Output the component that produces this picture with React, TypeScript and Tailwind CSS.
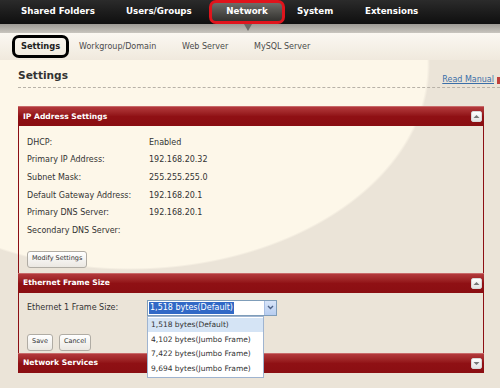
import React from "react";

const rows: [string, string][] = [
  ["DHCP:", "Enabled"],
  ["Primary IP Address:", "192.168.20.32"],
  ["Subnet Mask:", "255.255.255.0"],
  ["Default Gateway Address:", "192.168.20.1"],
  ["Primary DNS Server:", "192.168.20.1"],
  ["Secondary DNS Server:", ""],
];

function Toggle({ up }: { up: boolean }) {
  return (
    <div className="w-[11px] h-[11px] rounded-[2px] bg-gradient-to-b from-white to-[#e4e4e4] border border-[#d8d8d8] flex items-center justify-center">
      <svg width="7" height="5" viewBox="0 0 7 5">
        {up ? (
          <path d="M0.5 4 L3.5 1 L6.5 4 Z" fill="#777" />
        ) : (
          <path d="M0.5 1 L3.5 4 L6.5 1 Z" fill="#777" />
        )}
      </svg>
    </div>
  );
}

function Header({ title, up }: { title: string; up: boolean }) {
  return (
    <div className="h-[20px] flex items-center justify-between pl-[5px] pr-[2px] bg-gradient-to-b from-[#b3393c] via-[#8f1014] to-[#8a0e12] border-t border-[#c86a6a] text-white font-bold text-[7.6px]">
      <span>{title}</span>
      <Toggle up={up} />
    </div>
  );
}

function Btn({ children }: { children: React.ReactNode }) {
  return (
    <div className="h-[17px] px-[4px] flex items-center rounded-[3px] border border-[#b0aca4] bg-gradient-to-b from-white to-[#ebe8e2] text-[6.5px] text-[#333]">
      {children}
    </div>
  );
}

export default function App() {
  return (
    <div
      className="w-[500px] h-[388px] overflow-hidden bg-[#ebe4d8] text-[#333]"
      style={{ fontFamily: '"DejaVu Sans", Verdana, sans-serif' }}
    >
      {/* top nav */}
      <div className="h-[24px] bg-gradient-to-b from-[#2b2b2b] to-[#0f0f0f] flex items-center text-white font-bold text-[8.7px]">
        <div className="ml-[21px] w-[105px]">Shared Folders</div>
        <div className="w-[83px]">Users/Groups</div>
        <div className="h-[24px] w-[76px] rounded-[7px] border-[3px] border-[#e0141c] flex items-center justify-center bg-gradient-to-b from-[#6f6e69] to-[#33322f]">
          Network
        </div>
        <div className="ml-[12px] w-[68px]">System</div>
        <div>Extensions</div>
      </div>
      {/* gray strip */}
      <div className="h-[9px] bg-gradient-to-b from-[#9c9994] to-[#c9c6bf] pl-[244px]">
        <div className="w-0 h-0 border-l-[4px] border-r-[4px] border-t-[7px] border-l-transparent border-r-transparent border-t-[#6c6a66]" />
      </div>
      {/* sub nav */}
      <div className="h-[27px] bg-gradient-to-b from-[#fbf8f2] to-[#f0e9dd] flex items-center text-[8px] text-[#4a4a4a]">
        <div className="ml-[12px] h-[23px] w-[57px] rounded-[7px] border-[3px] border-black flex items-center justify-center font-bold text-[#222] text-[8.3px]">
          Settings
        </div>
        <div className="ml-[10px] w-[103px]">Workgroup/Domain</div>
        <div className="w-[72px]">Web Server</div>
        <div>MySQL Server</div>
      </div>
      {/* main */}
      <div className="h-[328px] pl-[18px] bg-[radial-gradient(ellipse_300px_205px_at_130px_5px,#fdf7e9_99%,#ebe4d8_100%)]">
        <div className="h-[28px] flex justify-between border-b border-dashed border-[#b8b2a8]">
          <div className="pt-[9px] text-[10.6px] font-bold text-[#333] leading-[12px]">Settings</div>
          <div className="pt-[15px] text-[8px] leading-[10px] whitespace-nowrap flex items-start">
            <span className="text-[#3b6fa8] underline">Read Manual</span>
            <div className="ml-[3px] mt-[2px] w-[3px] h-[7px] bg-[#c0403a]" />
          </div>
        </div>
        <div className="mt-[18px] mr-[16px]">
          {/* IP Address panel */}
          <Header title="IP Address Settings" up />
          <div className="border-x border-[#8c0f14] pl-[8px] pt-[8px] pb-[5px] text-[8px]">
            {rows.map(([l, v]) => (
              <div key={l} className="h-[17.6px] flex items-center">
                <div className="w-[122px]">{l}</div>
                <div>{v}</div>
              </div>
            ))}
            <div className="mt-[11px] flex">
              <Btn>Modify Settings</Btn>
            </div>
          </div>
          {/* Ethernet panel */}
          <Header title="Ethernet Frame Size" up />
          <div className="border-x border-[#8c0f14] pl-[8px] pt-[7px] pb-[2px] text-[8px]">
            <div className="h-[16px] flex items-center">
              <div className="w-[120px]">Ethernet 1 Frame Size:</div>
              <div className="relative">
                <div className="w-[130px] h-[16px] border border-[#7f9db9] bg-white flex items-center pl-[1px]">
                  <span className="bg-[#3169c6] text-white px-[1px] leading-[12px]">1,518 bytes(Default)</span>
                  <div className="ml-auto w-[12px] h-[14px] bg-gradient-to-b from-[#d8e4f8] to-[#b7cdf0] border-l border-[#a9bfe3] flex items-center justify-center">
                    <svg width="7" height="5" viewBox="0 0 7 5">
                      <path d="M1 1 L3.5 3.5 L6 1" stroke="#4d6185" strokeWidth="1.4" fill="none" />
                    </svg>
                  </div>
                </div>
                <div className="absolute left-0 top-[16px] w-[117px] border border-[#9fb4d0] bg-white z-10 text-[7.5px] py-[1px]">
                  <div className="h-[14.5px] flex items-center pl-[3px] bg-[#d5e4f5]">1,518 bytes(Default)</div>
                  <div className="h-[14.5px] flex items-center pl-[3px]">4,102 bytes(Jumbo Frame)</div>
                  <div className="h-[14.5px] flex items-center pl-[3px]">7,422 bytes(Jumbo Frame)</div>
                  <div className="h-[14.5px] flex items-center pl-[3px]">9,694 bytes(Jumbo Frame)</div>
                </div>
              </div>
            </div>
            <div className="mt-[18px] flex gap-[6px]">
              <Btn>Save</Btn>
              <Btn>Cancel</Btn>
            </div>
          </div>
          <Header title="Network Services" up={false} />
        </div>
      </div>
    </div>
  );
}
